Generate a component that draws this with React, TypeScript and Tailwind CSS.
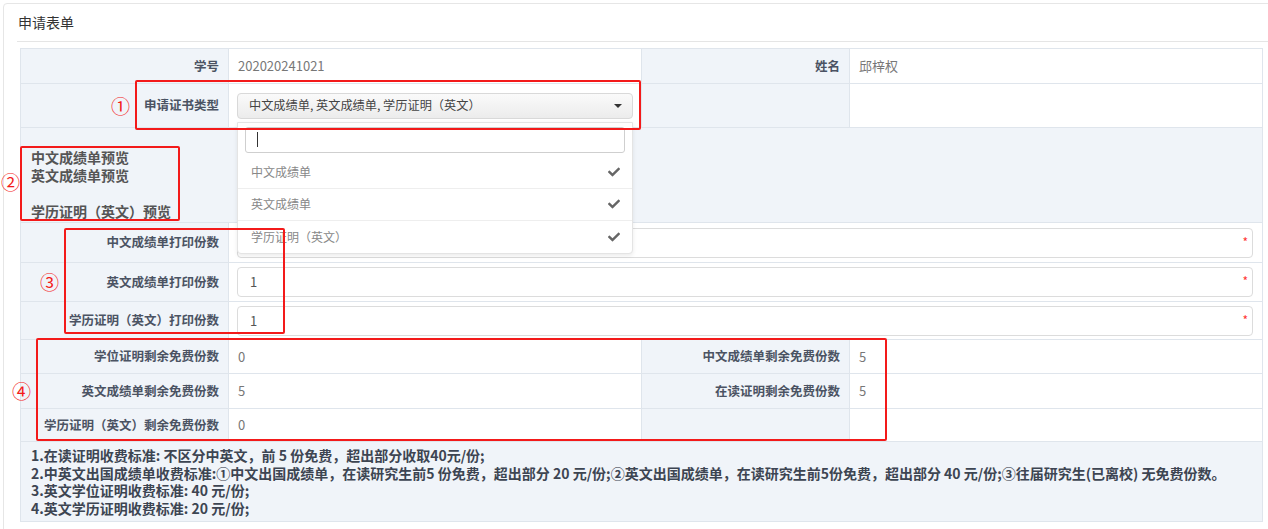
import { FaCheck } from "react-icons/fa";

const FONT = "font-['Noto_Sans_CJK_SC','Noto_Sans',sans-serif]";
const labelCls =
  "bg-[#f0f4f9] border border-[#dfe5ec] text-right pr-[9px] text-[12.5px] font-bold text-[#4b5363] align-middle";
const valueCls =
  "bg-white border border-[#dfe5ec] pl-[9px] text-[13px] text-[#777] align-middle";

function CountInput({ value }: { value?: string }) {
  return (
    <div className="relative h-[30px] border border-[#dcdcdc] rounded-[4px] bg-white flex items-center pl-[12px] text-[13px] text-[#555]">
      {value}
      <span className="absolute right-[4px] top-[7px] text-[12px] leading-none text-[#f33]">*</span>
    </div>
  );
}

function TypeSelect() {
  const items = ["中文成绩单", "英文成绩单", "学历证明（英文）"];
  return (
    <div className="relative">
      <div className="h-[26px] border border-[#d9d9d9] rounded-[4px] bg-gradient-to-b from-[#fafafa] to-[#ececec] flex items-center pl-[11px] pr-[10px] text-[12.2px] text-[#444]">
        <span className="flex-1">中文成绩单, 英文成绩单, 学历证明（英文）</span>
        <span className="w-0 h-0 border-l-[4px] border-r-[4px] border-t-[4px] border-l-transparent border-r-transparent border-t-[#333]" />
      </div>
      <div className="absolute z-20 left-0 top-[29px] w-full bg-white border border-[#e4e4e4] rounded-b-[4px] shadow-[0_2px_4px_rgba(0,0,0,0.08)]">
        <div className="px-[7px] pt-[4px] pb-[4px]">
          <div className="h-[26px] border border-[#cfcfcf] rounded-[3px] flex items-center pl-[11px]">
            <span className="w-px h-[15px] bg-[#333]" />
          </div>
        </div>
        {items.map((t, i) => (
          <div
            key={t}
            className={
              "h-[32px] flex items-center pl-[13px] pr-[12px] text-[12px] text-[#888] " +
              (i < items.length - 1 ? "border-b border-[#eeeeee]" : "")
            }
          >
            <span className="flex-1">{t}</span>
            <FaCheck className="text-[#666] w-[12px] h-[12px]" />
          </div>
        ))}
      </div>
    </div>
  );
}

function Mark({ box, num, at }: { box: string; num: string; at: string }) {
  return (
    <>
      <div className={"absolute z-30 border-2 border-[#f31a1a] rounded-[2px] pointer-events-none " + box} />
      <span className={"absolute z-30 text-[19px] leading-none text-[#f31a1a] " + at}>{num}</span>
    </>
  );
}

export default function App() {
  return (
    <div className={"relative w-[1268px] h-[529px] overflow-hidden bg-white " + FONT}>
      <div className="ml-[3px] mt-[3px] w-[1280px] h-[540px] border border-[#e6e6e6] rounded-[4px]">
        <div className="h-[37px] flex items-center pl-[14px] text-[14px] text-[#333]">申请表单</div>
        <div className="ml-[13px] border-t border-[#e5e5e5]" />
        <table className="ml-[16px] mt-[6px] w-[1242px] table-fixed border-collapse">
          <colgroup>
            <col className="w-[208px]" />
            <col className="w-[413px]" />
            <col className="w-[208px]" />
            <col className="w-[413px]" />
          </colgroup>
          <tbody>
            <tr className="h-[35px]">
              <td className={labelCls}>学号</td>
              <td className={valueCls}>202020241021</td>
              <td className={labelCls}>姓名</td>
              <td className={valueCls + " text-[12px]"}>邱梓权</td>
            </tr>
            <tr className="h-[44px]">
              <td className={labelCls}>申请证书类型</td>
              <td className="bg-white border border-[#dfe5ec] pl-[8px] pr-[8px] align-middle">
                <TypeSelect />
              </td>
              <td className={labelCls}></td>
              <td className={valueCls}></td>
            </tr>
            <tr className="h-[95px]">
              <td
                colSpan={4}
                className="bg-[#f0f4f9] border border-[#dfe5ec] align-top pt-[20px] pl-[10px] text-[14px] leading-[18px] font-bold text-[#555]"
              >
                <div>中文成绩单预览</div>
                <div>英文成绩单预览</div>
                <div className="h-[18px]" />
                <div>学历证明（英文）预览</div>
              </td>
            </tr>
            <tr className="h-[40px]">
              <td className={labelCls}>中文成绩单打印份数</td>
              <td colSpan={3} className="bg-white border border-[#dfe5ec] pl-[8px] pr-[9px] align-middle">
                <CountInput />
              </td>
            </tr>
            <tr className="h-[39px]">
              <td className={labelCls}>英文成绩单打印份数</td>
              <td colSpan={3} className="bg-white border border-[#dfe5ec] pl-[8px] pr-[9px] align-middle">
                <CountInput value="1" />
              </td>
            </tr>
            <tr className="h-[38px]">
              <td className={labelCls}>学历证明（英文）打印份数</td>
              <td colSpan={3} className="bg-white border border-[#dfe5ec] pl-[8px] pr-[9px] align-middle">
                <CountInput value="1" />
              </td>
            </tr>
            <tr className="h-[34px]">
              <td className={labelCls}>学位证明剩余免费份数</td>
              <td className={valueCls}>0</td>
              <td className={labelCls}>中文成绩单剩余免费份数</td>
              <td className={valueCls}>5</td>
            </tr>
            <tr className="h-[35px]">
              <td className={labelCls}>英文成绩单剩余免费份数</td>
              <td className={valueCls}>5</td>
              <td className={labelCls}>在读证明剩余免费份数</td>
              <td className={valueCls}>5</td>
            </tr>
            <tr className="h-[33px]">
              <td className={labelCls}>学历证明（英文）剩余免费份数</td>
              <td className={valueCls}>0</td>
              <td className={labelCls}></td>
              <td className={valueCls}></td>
            </tr>
            <tr className="h-[80px]">
              <td
                colSpan={4}
                className="bg-[#f0f4f9] border border-[#dfe5ec] align-top pt-[5px] pl-[10px] text-[14px] leading-[17.5px] font-bold text-[#3d4552]"
              >
                <div>1.在读证明收费标准: 不区分中英文，前 5 份免费，超出部分收取40元/份;</div>
                <div>
                  2.中英文出国成绩单收费标准:①中文出国成绩单，在读研究生前5 份免费，超出部分 20 元/份;②英文出国成绩单，在读研究生前5份免费，超出部分 40 元/份;③往届研究生(已离校) 无免费份数。
                </div>
                <div>3.英文学位证明收费标准: 40 元/份;</div>
                <div>4.英文学历证明收费标准: 20 元/份;</div>
              </td>
            </tr>
          </tbody>
        </table>
      </div>

      <Mark box="left-[135px] top-[80px] w-[506px] h-[50px]" num="①" at="left-[111px] top-[96px]" />
      <Mark box="left-[20px] top-[146px] w-[160px] h-[75px]" num="②" at="left-[1px] top-[172px]" />
      <Mark box="left-[64px] top-[228px] w-[221px] h-[106px]" num="③" at="left-[40px] top-[272px]" />
      <Mark box="left-[36px] top-[338px] w-[851px] h-[103px]" num="④" at="left-[12px] top-[381px]" />
    </div>
  );
}
